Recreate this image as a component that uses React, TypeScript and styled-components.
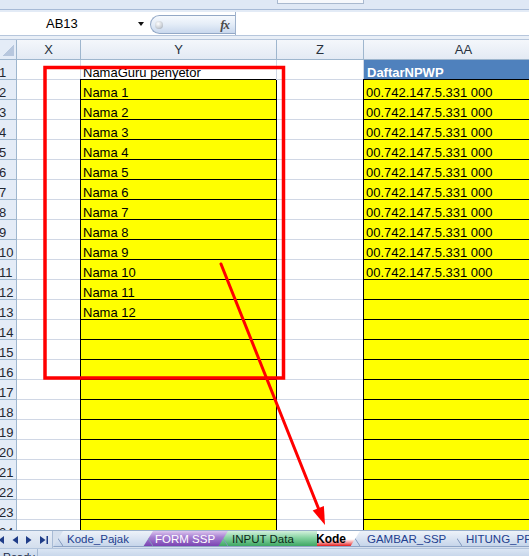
import React from "react";
import styled, { createGlobalStyle, css } from "styled-components";

type Fill = "none" | "yellow" | "blue";
type TabKind = "plain" | "purple" | "green" | "active";

interface CellData {
  text?: string;
  fill?: Fill;
  boxed?: boolean;
}

const GRID = "#d0d7e5";
const HEAD_LINE = "#9eb6ce";

const GlobalStyle = createGlobalStyle`
  html, body {
    margin: 0;
    padding: 0;
    background: #ffffff;
    overflow: hidden;
  }
  body {
    font-family: "Liberation Sans", Arial, sans-serif;
  }
`;

const Window = styled.div`
  width: 529px;
  height: 556px;
  display: flex;
  flex-direction: column;
  overflow: hidden;
  background: #ffffff;
`;

const RibbonEdge = styled.div`
  flex: none;
  height: 9px;
  padding-left: 277px;
  display: flex;
  background: #dfe8f5;
  border-bottom: 1px solid #a7bad6;
`;

const RibbonStub = styled.div`
  width: 85px;
  height: 3px;
  background: #f6f8fc;
  border: 1px solid #a9b9cf;
  border-top: none;
`;

const FormulaBar = styled.div`
  flex: none;
  height: 23px;
  padding-top: 2px;
  display: flex;
  background: #e3ebf6;
  border-bottom: 1px solid #b6c6dc;
`;

const NameBox = styled.div`
  width: 150px;
  box-sizing: border-box;
  padding: 0 6px 0 46px;
  display: flex;
  align-items: center;
  justify-content: space-between;
  background: #ffffff;
  font-size: 13px;
  color: #000;
`;

const Caret = styled.span`
  width: 0;
  height: 0;
  border-left: 3.5px solid transparent;
  border-right: 3.5px solid transparent;
  border-top: 4px solid #111;
`;

const PillSlot = styled.div`
  width: 85px;
  padding-top: 3px;
  background: #ffffff;
  display: flex;
`;

const Pill = styled.div`
  flex: 1;
  height: 19px;
  box-sizing: border-box;
  border: 1px solid #93a8c6;
  border-right: none;
  border-radius: 10px 0 0 10px;
  background: linear-gradient(#f6f9fd 0%, #e6eef8 45%, #c9d8ed 100%);
  display: flex;
  align-items: center;
  justify-content: space-between;
  padding: 0 6px 0 4px;
`;

const Grip = styled.span`
  width: 8px;
  height: 8px;
  border-radius: 50%;
  background: radial-gradient(circle at 40% 35%, #ffffff 0%, #c8cdd4 60%, #8c949e 100%);
`;

const Fx = styled.span`
  font-family: "Liberation Serif", "Times New Roman", serif;
  font-style: italic;
  font-weight: bold;
  font-size: 13px;
  color: #4a4a4a;
  letter-spacing: -1px;
`;

const FormulaInput = styled.div`
  flex: 1;
  background: #ffffff;
  border-left: 1px solid #9fb2cc;
`;

const Gap = styled.div`
  flex: none;
  height: 3px;
  background: #e9eff7;
  border-bottom: 1px solid #b6c6dc;
`;

const Sheet = styled.div`
  position: relative;
  flex: 1;
  overflow: hidden;
`;

const Grid = styled.div`
  display: grid;
  grid-template-columns: 17px 64px 196px 87px 200px;
  grid-auto-rows: 20px;
`;

const Corner = styled.div`
  box-sizing: border-box;
  background: #e4ecf7;
  border-right: 1px solid ${HEAD_LINE};
  border-bottom: 1px solid ${HEAD_LINE};
  padding: 4px 2px 3px 3px;
  display: flex;
`;

const CornerMark = styled.span`
  flex: 1;
  background: linear-gradient(to bottom right, transparent 50%, #b7c7de 50%);
`;

const ColHead = styled.div`
  box-sizing: border-box;
  display: flex;
  align-items: center;
  justify-content: center;
  background: linear-gradient(#f4f7fb, #e3eaf4);
  border-right: 1px solid ${HEAD_LINE};
  border-bottom: 1px solid ${HEAD_LINE};
  font-size: 13px;
  color: #27313e;
`;

const RowHead = styled.div`
  box-sizing: border-box;
  display: flex;
  align-items: flex-end;
  overflow: hidden;
  background: #e4ecf7;
  border-right: 1px solid ${HEAD_LINE};
  border-bottom: 1px solid ${HEAD_LINE};
  font-size: 13px;
  line-height: 13px;
  color: #1e2630;
  text-indent: -1px;
`;

const Cell = styled.div<{ $fill: Fill; $boxed: boolean }>`
  box-sizing: border-box;
  display: flex;
  align-items: flex-end;
  overflow: hidden;
  white-space: nowrap;
  padding-left: 2px;
  font-size: 13px;
  line-height: 13px;
  color: #000;
  background: #ffffff;
  border-right: 1px solid ${GRID};
  border-bottom: 1px solid ${GRID};

  ${(p) =>
    p.$fill === "yellow" &&
    css`
      background: #ffff00;
    `}

  ${(p) =>
    p.$fill === "blue" &&
    css`
      background: #4f81bd;
      border-color: #4f81bd;
      color: #ffffff;
      font-weight: bold;
      padding-left: 3px;
    `}

  ${(p) =>
    p.$boxed &&
    css`
      border-right-color: #000;
      border-bottom-color: #000;
      box-shadow: -1px -1px 0 #000;
    `}
`;

const Overlay = styled.svg`
  position: absolute;
  left: 0;
  top: 0;
  pointer-events: none;
`;

const TabBar = styled.div`
  flex: none;
  height: 18px;
  box-sizing: border-box;
  display: flex;
  overflow: hidden;
  background: #d6e0ee;
  border-top: 1px solid #9aafca;
`;

const NavGroup = styled.div`
  flex: none;
  width: 53px;
  box-sizing: border-box;
  display: flex;
  align-items: center;
  gap: 8px;
  padding-left: 0;
  border-right: 1px solid #a8bbd5;
  background: linear-gradient(#e8eef7, #d3deed);
  overflow: hidden;

  & > svg:first-child {
    margin-left: -4px;
  }
`;

const slant = "linear-gradient(to top right, transparent calc(50% - 0.8px), #7f96bb 50%, transparent calc(50% + 0.8px)) 0 0 / 10px 100% no-repeat";

const kindStyles: Record<TabKind, ReturnType<typeof css>> = {
  plain: css`
    background: ${slant}, linear-gradient(#edf2f9 0%, #dae4f2 50%, #c6d5ea 100%);
    color: #23408f;
  `,
  purple: css`
    background: ${slant}, linear-gradient(#dcc6ef 0%, #a77fd2 40%, #7a43b2 100%);
    color: #ffffff;
  `,
  green: css`
    background: ${slant}, linear-gradient(#d4f1dd 0%, #86d3a1 45%, #3ea763 100%);
    color: #0d2a18;
  `,
  active: css`
    background: linear-gradient(#ffffff 0%, #ffffff 55%, #f58a8a 80%, #e41c1c 100%);
    color: #000;
    font-weight: bold;
    font-size: 12px;
    clip-path: none;
    border-left: 1px solid #9aafca;
  `,
};

const Tab = styled.div<{ $w: number; $pad: number; $kind: TabKind; $first?: boolean }>`
  flex: none;
  width: ${(p) => p.$w}px;
  height: 16px;
  box-sizing: border-box;
  margin-left: ${(p) => (p.$first ? 0 : -10)}px;
  padding-left: ${(p) => p.$pad}px;
  font-size: 11.5px;
  line-height: 16px;
  white-space: nowrap;
  overflow: hidden;
  clip-path: polygon(0 100%, 10px 0, 100% 0, 100% 100%);
  border-bottom: 1px solid #8fa5c6;
  ${(p) => kindStyles[p.$kind]}
`;

const StatusBar = styled.div`
  flex: none;
  height: 8px;
  display: flex;
  overflow: hidden;
  background: linear-gradient(#dbe6f4, #c8d7eb);
  border-top: 1px solid #b3c5dd;
  box-sizing: border-box;
`;

const Ready = styled.div`
  width: 38px;
  box-sizing: border-box;
  padding: 3px 0 0 3px;
  font-size: 11px;
  line-height: 11px;
  color: #1d2b44;
  border-right: 1px solid #a4b8d3;
`;

const NavIcon: React.FC<{ dir: "first" | "prev" | "next" | "last" }> = ({ dir }) => {
  const wide = dir === "first" || dir === "last";
  return (
    <svg width={wide ? 8 : 6} height="8" viewBox={wide ? "0 0 8 8" : "0 0 6 8"}>
      {dir === "first" && (
        <>
          <rect x="0" y="0" width="1.5" height="8" fill="#1f3c88" />
          <polygon points="8,0 8,8 2.5,4" fill="#1f3c88" />
        </>
      )}
      {dir === "prev" && <polygon points="6,0 6,8 0.5,4" fill="#1f3c88" />}
      {dir === "next" && <polygon points="0,0 0,8 5.5,4" fill="#1f3c88" />}
      {dir === "last" && (
        <>
          <polygon points="0,0 0,8 5.5,4" fill="#1f3c88" />
          <rect x="6.5" y="0" width="1.5" height="8" fill="#1f3c88" />
        </>
      )}
    </svg>
  );
};

const NPWP = "00.742.147.5.331 000";
const ROWS = 24;

function rowCells(r: number): CellData[] {
  const x: CellData = {};
  const y: CellData =
    r === 1
      ? { text: "NamaGuru penyetor" }
      : { text: r <= 13 ? `Nama ${r - 1}` : undefined, fill: "yellow", boxed: true };
  const z: CellData = {};
  const aa: CellData =
    r === 1
      ? { text: "DaftarNPWP", fill: "blue" }
      : { text: r <= 11 ? NPWP : undefined, fill: "yellow", boxed: true };
  return [x, y, z, aa];
}

const tabs: { label: string; w: number; pad: number; kind: TabKind }[] = [
  { label: "Kode_Pajak", w: 100, pad: 14, kind: "plain" },
  { label: "FORM SSP", w: 85, pad: 12, kind: "purple" },
  { label: "INPUT Data", w: 99, pad: 14, kind: "green" },
  { label: "Kode", w: 53, pad: 8, kind: "active" },
  { label: "GAMBAR_SSP", w: 112, pad: 17, kind: "plain" },
  { label: "HITUNG_PPh", w: 100, pad: 14, kind: "plain" },
];

const App: React.FC = () => {
  return (
    <>
      <GlobalStyle />
      <Window>
        <RibbonEdge>
          <RibbonStub />
        </RibbonEdge>
        <FormulaBar>
          <NameBox>
            <span>AB13</span>
            <Caret />
          </NameBox>
          <PillSlot>
            <Pill>
              <Grip />
              <Fx>fx</Fx>
            </Pill>
          </PillSlot>
          <FormulaInput />
        </FormulaBar>
        <Gap />
        <Sheet>
          <Grid>
            <Corner>
              <CornerMark />
            </Corner>
            {["X", "Y", "Z", "AA"].map((c) => (
              <ColHead key={c}>{c}</ColHead>
            ))}
            {Array.from({ length: ROWS }, (_, i) => i + 1).map((r) => (
              <React.Fragment key={r}>
                <RowHead>{r}</RowHead>
                {rowCells(r).map((c, j) => (
                  <Cell key={j} $fill={c.fill ?? "none"} $boxed={!!c.boxed}>
                    {c.text}
                  </Cell>
                ))}
              </React.Fragment>
            ))}
          </Grid>
          <Overlay width="529" height="490" viewBox="0 0 529 490">
            <rect x="45" y="27.5" width="238.5" height="310.5" fill="none" stroke="#ff0000" strokeWidth="3.5" />
            <line x1="221" y1="224" x2="318.5" y2="468.5" stroke="#ff0000" strokeWidth="3" strokeLinecap="round" />
            <polygon points="325,485 312.7,470.5 323.9,466.1" fill="#ff0000" />
          </Overlay>
        </Sheet>
        <TabBar>
          <NavGroup>
            <NavIcon dir="first" />
            <NavIcon dir="prev" />
            <NavIcon dir="next" />
            <NavIcon dir="last" />
          </NavGroup>
          {tabs.map((t, i) => (
            <Tab key={t.label} $w={t.w} $pad={t.pad} $kind={t.kind} $first={i === 0}>
              {t.label}
            </Tab>
          ))}
        </TabBar>
        <StatusBar>
          <Ready>Ready</Ready>
        </StatusBar>
      </Window>
    </>
  );
};

export default App;
